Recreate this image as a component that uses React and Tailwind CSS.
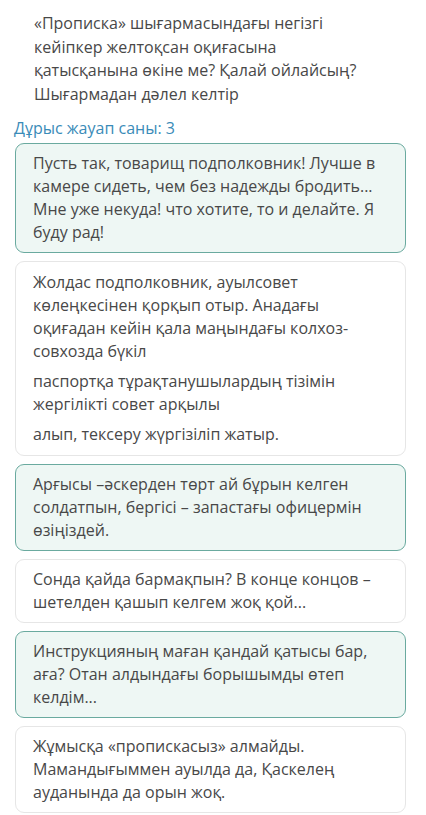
export default function App() {
  const green = "rounded-[9px] border border-[#6aaa9f] bg-[#eef7f4] pl-[17px] pr-[10px] py-[8px]";
  const white = "rounded-[9px] border border-[#e6e6e6] bg-white pl-[17px] pr-[10px] py-[8px]";
  return (
    <div className="w-[426px] min-h-[815px] bg-white text-[#484848] text-[16px] leading-[23px]" style={{ fontFamily: '"Open Sans", "Noto Sans", sans-serif' }}>
      <div className="pl-[34px] pt-[12px] leading-[23.5px]">
        «Прописка» шығармасындағы негізгі<br />
        кейіпкер желтоқсан оқиғасына<br />
        қатысқанына өкіне ме? Қалай ойлайсың?<br />
        Шығармадан дәлел келтір
      </div>
      <div className="pl-[14px] mt-[12px] text-[#3a8bb8] leading-[20px]">Дұрыс жауап саны: 3</div>
      <div className="flex flex-col gap-[8px] px-[15px] mt-[5px] w-[421px]">
        <div className={green}>
          Пусть так, товарищ подполковник! Лучше в<br />
          камере сидеть, чем без надежды бродить...<br />
          Мне уже некуда! что хотите, то и делайте. Я<br />
          буду рад!
        </div>
        <div className={white + " py-[9px]"}>
          <p>
            Жолдас подполковник, ауылсовет<br />
            көлеңкесінен қорқып отыр. Анадағы<br />
            оқиғадан кейін қала маңындағы колхоз-<br />
            совхозда бүкіл
          </p>
          <p className="mt-[7px]">
            паспортқа тұрақтанушылардың тізімін<br />
            жергілікті совет арқылы
          </p>
          <p className="mt-[7px]">алып, тексеру жүргізіліп жатыр.</p>
        </div>
        <div className={green}>
          Арғысы –әскерден төрт ай бұрын келген<br />
          солдатпын, бергісі – запастағы офицермін<br />
          өзіңіздей.
        </div>
        <div className={white}>
          Сонда қайда бармақпын? В конце концов –<br />
          шетелден қашып келгем жоқ қой...
        </div>
        <div className={green}>
          Инструкцияның маған қандай қатысы бар,<br />
          аға? Отан алдындағы борышымды өтеп<br />
          келдім...
        </div>
        <div className={white}>
          Жұмысқа «пропискасыз» алмайды.<br />
          Мамандығыммен ауылда да, Қаскелең<br />
          ауданында да орын жоқ.
        </div>
      </div>
    </div>
  );
}
